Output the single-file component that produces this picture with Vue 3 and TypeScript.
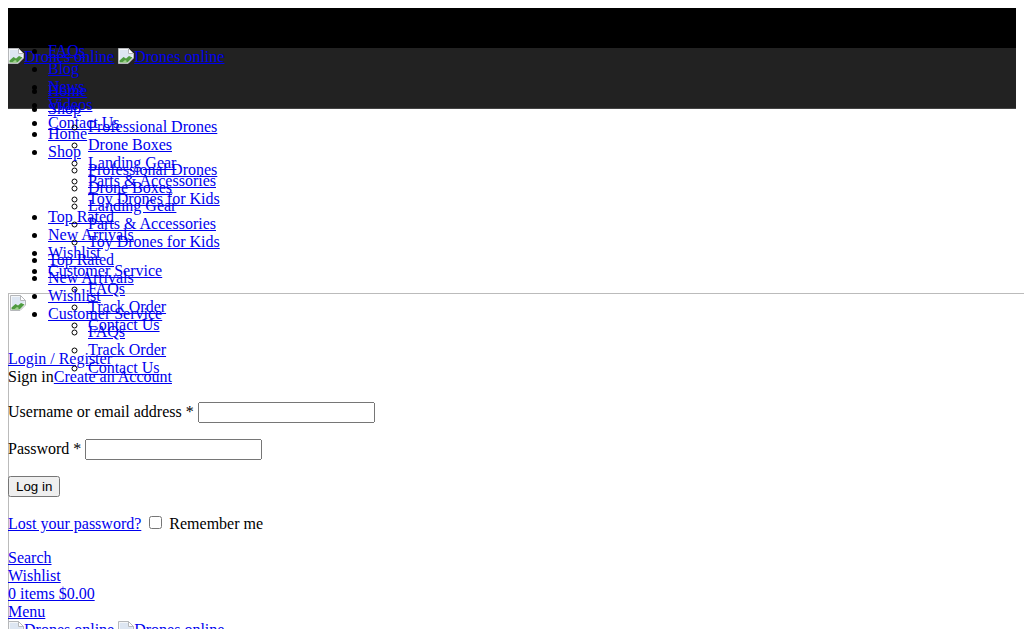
<script setup lang="ts">
interface MenuLink {
  label: string
  children?: string[]
}

const topLinks: MenuLink[] = [
  { label: 'FAQs' },
  { label: 'Blog' },
  { label: 'News' },
  { label: 'Videos' },
  { label: 'Contact Us' },
]

const shopLinks: MenuLink[] = [
  { label: 'Home' },
  {
    label: 'Shop',
    children: ['Professional Drones', 'Drone Boxes', 'Landing Gear', 'Parts & Accessories', 'Toy Drones for Kids'],
  },
  { label: 'Top Rated' },
  { label: 'New Arrivals' },
  { label: 'Wishlist' },
  { label: 'Customer Service', children: ['FAQs', 'Track Order', 'Contact Us'] },
]

const menus = [
  { id: 'top', links: topLinks },
  { id: 'main', links: shopLinks },
  { id: 'mobile', links: shopLinks },
]

const logos = ['first', 'second']
</script>

<template>
  <div class="page">
    <header class="masthead">
      <div class="topbar"></div>
      <div class="brandbar">
        <a v-for="logo in logos" :key="logo" class="logo" href="#">
          <svg class="broken" viewBox="0 0 16 16" width="16" height="16" aria-hidden="true">
            <path d="M.5.5H10.5L15.5 5.5V10L10 15.5H.5Z" fill="#f4f6f8" stroke="#b5b7ba" />
            <path d="M10.5.5V5.5H15.5Z" fill="#fff" stroke="#b5b7ba" />
            <path d="M2 2H10V6H14.5V8L2 12Z" fill="#dde6f2" />
            <path d="M1.5 14.5V12.5L5.5 9L8 10.5L11 8L14.5 9.5L9.5 14.5Z" fill="#4e9a3f" />
            <path d="M4 14.5L7 12L9 13L7.5 14.5Z" fill="#9fd08c" />
          </svg><span class="alt">Drones online</span>
        </a>
      </div>
    </header>

    <nav v-for="menu in menus" :key="menu.id" class="menu" :class="`menu-${menu.id}`">
      <ul>
        <li v-for="link in menu.links" :key="link.label">
          <a href="#">{{ link.label }}</a>
          <ul v-if="link.children">
            <li v-for="child in link.children" :key="child"><a href="#">{{ child }}</a></li>
          </ul>
        </li>
      </ul>
    </nav>

    <aside class="panel">
      <svg class="broken panel-icon" viewBox="0 0 16 16" width="16" height="16" aria-hidden="true">
        <path d="M.5.5H10.5L15.5 5.5V10L10 15.5H.5Z" fill="#f4f6f8" stroke="#b5b7ba" />
        <path d="M10.5.5V5.5H15.5Z" fill="#fff" stroke="#b5b7ba" />
        <path d="M2 2H10V6H14.5V8L2 12Z" fill="#dde6f2" />
        <path d="M1.5 14.5V12.5L5.5 9L8 10.5L11 8L14.5 9.5L9.5 14.5Z" fill="#4e9a3f" />
        <path d="M4 14.5L7 12L9 13L7.5 14.5Z" fill="#9fd08c" />
      </svg>
      <div><a href="#">Login / Register</a></div>
      <div>Sign in<a href="#">Create an Account</a></div>
      <form class="login" @submit.prevent>
        <p><label>Username or email address * <input type="text" /></label></p>
        <p><label>Password * <input type="password" /></label></p>
        <p><button type="submit">Log in</button></p>
        <p>
          <a href="#">Lost your password?</a>
          <label class="remember"><input type="checkbox" /> Remember me</label>
        </p>
      </form>
      <div><a href="#">Search</a></div>
      <div><a href="#">Wishlist</a></div>
      <div><a href="#">0 items $0.00</a></div>
      <div><a href="#">Menu</a></div>
      <div class="logos">
        <a v-for="logo in logos" :key="logo" class="logo" href="#">
          <svg class="broken" viewBox="0 0 16 16" width="16" height="16" aria-hidden="true">
            <path d="M.5.5H10.5L15.5 5.5V10L10 15.5H.5Z" fill="#f4f6f8" stroke="#b5b7ba" />
            <path d="M10.5.5V5.5H15.5Z" fill="#fff" stroke="#b5b7ba" />
            <path d="M2 2H10V6H14.5V8L2 12Z" fill="#dde6f2" />
            <path d="M1.5 14.5V12.5L5.5 9L8 10.5L11 8L14.5 9.5L9.5 14.5Z" fill="#4e9a3f" />
            <path d="M4 14.5L7 12L9 13L7.5 14.5Z" fill="#9fd08c" />
          </svg><span class="alt">Drones online</span>
        </a>
      </div>
    </aside>
  </div>
</template>

<style>
html,
body {
  overflow: hidden;
}
</style>

<style scoped>
.page {
  position: relative;
  height: 629px;
  padding: 8px 8px 0;
  box-sizing: border-box;
  overflow: hidden;
  font-family: "Liberation Serif", serif;
  font-size: 16px;
  color: #000;
}

a {
  color: #00e;
  text-decoration: underline;
}

.topbar {
  height: 40px;
  background: #000;
}

.brandbar {
  height: 60px;
  background: #222;
  border-bottom: 1px solid #444;
}

.logo {
  display: inline-block;
  text-decoration: none;
}

.logo + .logo {
  margin-left: 4px;
}

.alt {
  text-decoration: underline;
}

.broken {
  vertical-align: -2px;
}

.menu {
  position: absolute;
  left: 8px;
}

.menu ul {
  margin: 0;
  padding-left: 40px;
  list-style: disc;
}

.menu ul ul {
  list-style: circle;
}

.menu-top {
  top: 42px;
}

.menu-main {
  top: 82px;
}

.menu-mobile {
  top: 125px;
}

.panel {
  margin-top: 184px;
  margin-right: -20px;
  box-shadow: inset 1px 1px 0 #bbb;
}

.panel-icon {
  display: block;
  margin-left: 2px;
  padding: 2px 0 39px;
  box-sizing: content-box;
}

.login p {
  margin: 16px 0;
}

.login input[type="text"],
.login input[type="password"] {
  width: 177px;
  box-sizing: border-box;
}

.remember {
  margin-left: 4px;
}

.logos {
  white-space: nowrap;
}
</style>
